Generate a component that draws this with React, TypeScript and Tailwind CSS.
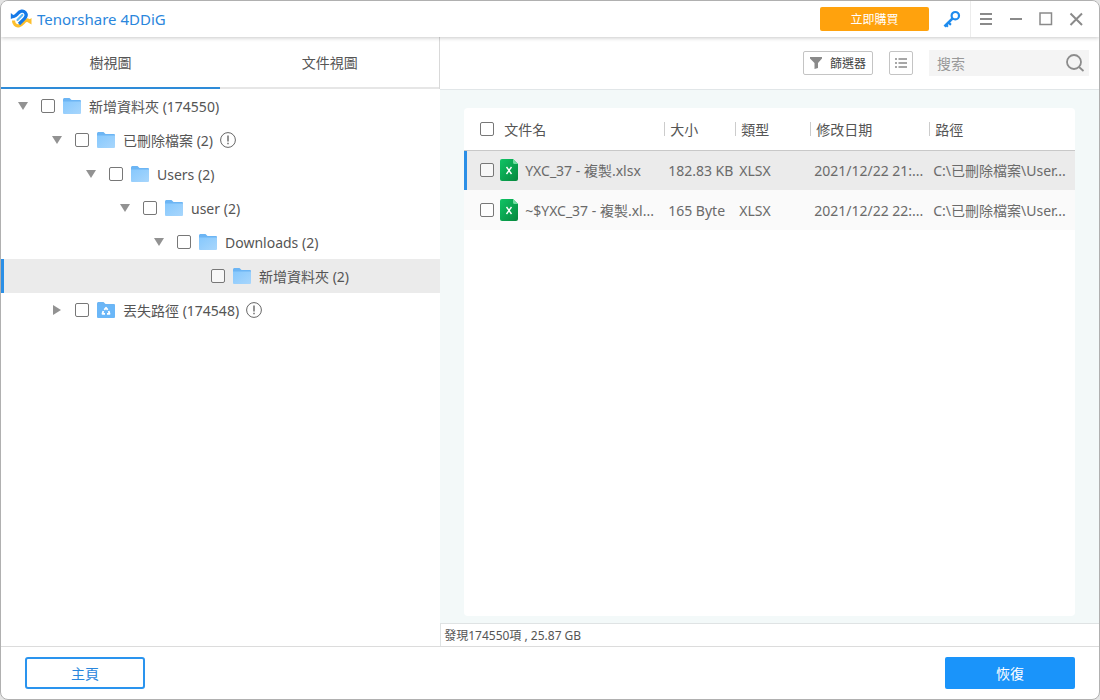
import React from "react";

type Node = {
  label: string;
  indent: string;
  state: "open" | "closed" | "leaf";
  info?: boolean;
  recycled?: boolean;
  selected?: boolean;
};

const nodes: Node[] = [
  { label: "新增資料夾 (174550)", indent: "pl-4", state: "open" },
  { label: "已刪除檔案 (2)", indent: "pl-[50px]", state: "open", info: true },
  { label: "Users (2)", indent: "pl-[84px]", state: "open" },
  { label: "user (2)", indent: "pl-[118px]", state: "open" },
  { label: "Downloads (2)", indent: "pl-[152px]", state: "open" },
  { label: "新增資料夾 (2)", indent: "pl-[186px]", state: "leaf", selected: true },
  { label: "丟失路徑 (174548)", indent: "pl-[50px]", state: "closed", info: true, recycled: true },
];

const files = [
  { name: "YXC_37 - 複製.xlsx", size: "182.83 KB", type: "XLSX", date: "2021/12/22 21:...", path: "C:\\已刪除檔案\\User...", selected: true },
  { name: "~$YXC_37 - 複製.xl...", size: "165 Byte", type: "XLSX", date: "2021/12/22 22:...", path: "C:\\已刪除檔案\\User...", selected: false },
];

const columns = ["大小", "類型", "修改日期", "路徑"];

function Check({ label }: { label: string }) {
  return (
    <input
      type="checkbox"
      aria-label={label}
      className="block size-[14px] shrink-0 appearance-none rounded-[2px] border border-[#777] bg-white/60 checked:bg-[#1a91f8]"
    />
  );
}

function Logo() {
  return (
    <svg width="22" height="20" viewBox="0 0 22 20" fill="none" aria-hidden="true">
      <path d="M3.500 11.500C3.500 15 6 17.300 8.800 16.800C11.800 16.200 13 13.800 15 12C16.500 10.600 18 10.600 19.500 12" stroke="#fdbf2d" strokeWidth="3.200" />
      <path d="M21.500 9V15.500L16.500 12.500Z" fill="#fdbf2d" />
      <path d="M2 7.300C4 8.300 5.500 7 7.500 4.800C10 1.800 13.200 1.200 15.200 3.500C17 5.800 16 8 14.200 9.800L9 15" stroke="#1479e8" strokeWidth="3.200" />
      <path d="M0.800 4V10L5.500 8Z" fill="#1479e8" />
      <path d="M12.300 6L7.500 11" stroke="#5cb8f5" strokeWidth="2.200" strokeLinecap="round" />
    </svg>
  );
}

function KeyIcon() {
  return (
    <svg width="18" height="18" viewBox="0 0 18 18" fill="none" stroke="#1e8bee" aria-hidden="true">
      <circle cx="12.300" cy="5.700" r="3.700" strokeWidth="2.200" />
      <path d="M9.800 8.200L1.500 16.500" strokeWidth="2.600" />
      <path d="M5.300 12.300l2.600 2.600M2.700 14.500l2.200 2.200" strokeWidth="2.200" />
    </svg>
  );
}

function Folder({ recycled }: { recycled?: boolean }) {
  return (
    <svg width="18" height="16" viewBox="0 0 18 16" className="shrink-0" aria-hidden="true">
      <defs>
        <linearGradient id="folder" x1="0" y1="0" x2="1" y2="1">
          <stop offset="0" stopColor="#86c8fd" />
          <stop offset="1" stopColor="#a8d6fc" />
        </linearGradient>
      </defs>
      <path d="M0 1.500Q0 0 1.200 0H6.500L8.500 2H17Q18 2 18 3V8H0Z" fill="#6cb5f4" />
      <path d="M0 3.500H18V15Q18 16 17 16H1Q0 16 0 15Z" fill={recycled ? "#6bb7f8" : "url(#folder)"} />
      {recycled && (
        <path
          d="M7.300 7.900L9 5.800L10.700 7.900M11.700 9L12.500 11.800H10M8 11.800H5.500L6.300 9"
          stroke="#fff"
          strokeWidth="1.800"
          strokeLinejoin="round"
          fill="none"
        />
      )}
    </svg>
  );
}

function SheetIcon() {
  return (
    <svg width="18" height="22" viewBox="0 0 18 22" className="shrink-0" aria-hidden="true">
      <defs>
        <linearGradient id="sheet" x1="0" y1="0" x2="1" y2="1">
          <stop offset="0" stopColor="#0fc465" />
          <stop offset="1" stopColor="#06873d" />
        </linearGradient>
      </defs>
      <path d="M2 0H13L18 5V20Q18 22 16 22H2Q0 22 0 20V2Q0 0 2 0Z" fill="url(#sheet)" />
      <path d="M13 0L18 5H14.500Q13 5 13 3.500Z" fill="#6fdd9f" />
      <path d="M6.500 8L11.500 15M11.500 8L6.500 15" stroke="#fff" strokeWidth="1.400" />
    </svg>
  );
}

function Arrow({ state }: { state: Node["state"] }) {
  if (state === "leaf") return <span className="w-3 shrink-0" />;
  return (
    <button aria-label={state === "open" ? "收合" : "展開"} className="w-3 shrink-0">
      <svg width="12" height="10" viewBox="0 0 12 10" className="block" aria-hidden="true">
        <path d={state === "open" ? "M1 1H11L6 9Z" : "M2 0V10L10 5Z"} fill="#929292" />
      </svg>
    </button>
  );
}

function InfoIcon() {
  return (
    <svg width="16" height="16" viewBox="0 0 16 16" fill="none" stroke="#666" className="shrink-0" aria-hidden="true">
      <circle cx="8" cy="8" r="7.400" />
      <path d="M8 3.500V9.500M8 10.800V12.300" strokeWidth="1.400" />
    </svg>
  );
}

export default function App() {
  return (
    <div className="h-screen bg-[#e4e4e4] font-['Noto_Sans','Noto_Sans_CJK_TC',sans-serif] text-sm text-[#555]">
      <div className="flex h-full flex-col overflow-hidden rounded-lg border border-[#b0b0b0] bg-white">
        <header className="relative z-10 flex h-9 shrink-0 items-center bg-white pl-[9px] shadow-[0_1px_4px_rgba(0,0,0,0.22)]">
          <Logo />
          <h1 className="ml-[5px] pt-0.5 text-[15px] font-normal text-[#2a86dc]">Tenorshare 4DDiG</h1>
          <button className="ml-auto h-6 w-[109px] rounded-[2px] bg-[#ffa20d] pt-0.5 text-xs text-white">立即購買</button>
          <button aria-label="註冊" className="ml-[14px]"><KeyIcon /></button>
          <div className="ml-[9px] flex h-full items-center gap-4 border-l border-[#ececec] pr-4 pl-2 text-[#8a8a8a]">
            <button aria-label="選單">
              <svg width="14" height="14" viewBox="0 0 14 14" stroke="currentColor" strokeWidth="2"><path d="M1 2H13M1 7H13M1 12H13" /></svg>
            </button>
            <button aria-label="最小化">
              <svg width="14" height="14" viewBox="0 0 14 14" stroke="currentColor" strokeWidth="2"><path d="M1 7H13" /></svg>
            </button>
            <button aria-label="最大化">
              <svg width="14" height="14" viewBox="0 0 14 14" stroke="currentColor" strokeWidth="1.500" fill="none"><path d="M1 1H12.500V12.500H1Z" /></svg>
            </button>
            <button aria-label="關閉">
              <svg width="14" height="14" viewBox="0 0 14 14" stroke="currentColor" strokeWidth="2"><path d="M1.500 1.500L13 13M13 1.500L1.500 13" /></svg>
            </button>
          </div>
        </header>

        <main className="flex min-h-0 flex-1">
          <aside className="flex w-2/5 shrink-0 flex-col">
            <div role="tablist" className="flex h-[52px] shrink-0 border-r border-[#d9d9d9]">
              <button role="tab" aria-selected="true" className="w-1/2 border-b-2 border-[#2e8bd8] pt-0.5">樹視圖</button>
              <button role="tab" aria-selected="false" className="w-1/2 border-b-2 border-[#e6e6e6] pt-0.5">文件視圖</button>
            </div>
            <ul>
              {nodes.map((n) => (
                <li
                  key={n.label}
                  className={`flex h-[34px] items-center ${n.indent} ${n.selected ? "bg-[#ebebeb] shadow-[inset_3px_0_0_#2b8fe6]" : ""}`}
                >
                  <Arrow state={n.state} />
                  <span className="ml-3 flex items-center gap-2">
                    <Check label={n.label} />
                    <Folder recycled={n.recycled} />
                  </span>
                  <span className="ml-2 pt-0.5 whitespace-nowrap">{n.label}</span>
                  {n.info && <span className="ml-[7px]"><InfoIcon /></span>}
                </li>
              ))}
            </ul>
          </aside>

          <section className="flex min-w-0 flex-1 flex-col">
            <div className="flex h-[53px] shrink-0 items-center justify-end border-b border-[#e1e6e8] pr-[10px]">
              <button className="flex h-6 items-center gap-[7px] rounded-[2px] border border-[#c4c4c4] pr-[6px] pl-[5px] text-xs text-[#444]">
                <svg width="14" height="12" viewBox="0 0 14 12" fill="#8a8a8a" aria-hidden="true"><path d="M1 0H13V1.500L9 6V11L5.500 12V6L1 1.500Z" /></svg>
                <span className="pt-0.5">篩選器</span>
              </button>
              <button aria-label="清單檢視" className="ml-4 flex size-6 items-center justify-center rounded-[2px] border border-[#c4c4c4]">
                <svg width="14" height="12" viewBox="0 0 14 12" stroke="#8a8a8a" strokeWidth="1.400" aria-hidden="true">
                  <path d="M1 2H3M4.500 2H13M1 6H3M4.500 6H13M1 10H3M4.500 10H13" />
                </svg>
              </button>
              <div className="ml-4 flex h-[26px] w-40 items-center bg-[#f4f4f4] pr-1 pl-2">
                <input aria-label="搜索" placeholder="搜索" className="min-w-0 flex-1 bg-transparent pt-0.5 outline-none placeholder:text-[#999]" />
                <button aria-label="開始搜索">
                  <svg width="19" height="19" viewBox="0 0 19 19" fill="none" stroke="#8c8c8c" strokeWidth="1.800" className="block" aria-hidden="true">
                    <circle cx="8" cy="8" r="7" /><path d="M13 13L17.500 17" />
                  </svg>
                </button>
              </div>
            </div>

            <div className="flex min-h-0 flex-1 bg-[#f3f9f9] pt-[18px] pr-6 pb-[7px] pl-6">
              <div className="min-w-0 flex-1 overflow-hidden rounded bg-white">
                <table className="w-full table-fixed border-collapse text-left">
                  <colgroup>
                    <col className="w-[200px]" /><col className="w-[71px]" /><col className="w-[75px]" /><col className="w-[119px]" /><col />
                  </colgroup>
                  <thead>
                    <tr className="h-[42px] border-b border-[#c8c8c8]">
                      <th className="font-normal">
                        <div className="flex items-center gap-[10px] pl-4">
                          <Check label="全選" />
                          <span className="pt-0.5">文件名</span>
                        </div>
                      </th>
                      {columns.map((c) => (
                        <th key={c} className="font-normal">
                          <div className="flex h-[14px] items-center border-l border-[#ccc] pl-[5px]">
                            <span className="pt-0.5">{c}</span>
                          </div>
                        </th>
                      ))}
                    </tr>
                  </thead>
                  <tbody className="text-[#6a6a6a]">
                    {files.map((f) => (
                      <tr key={f.name} className={`h-10 ${f.selected ? "bg-[#ebebeb] shadow-[inset_3px_0_0_#2b8fe6]" : "bg-[#fafafa]"}`}>
                        <td>
                          <div className="flex items-center pl-4">
                            <Check label={f.name} />
                            <span className="ml-[6px] shrink-0"><SheetIcon /></span>
                            <span className="ml-[7px] truncate pt-0.5">{f.name}</span>
                          </div>
                        </td>
                        <td className="pt-0.5 pl-1 whitespace-nowrap">{f.size}</td>
                        <td className="pt-0.5 pl-1 whitespace-nowrap">{f.type}</td>
                        <td className="truncate pt-0.5 pl-1">{f.date}</td>
                        <td className="truncate pt-0.5 pl-1">{f.path}</td>
                      </tr>
                    ))}
                  </tbody>
                </table>
              </div>
            </div>
            <div className="flex h-[23px] shrink-0 items-center border-t border-l border-[#dfe3e4] pt-0.5 pl-[3px] text-xs">發現174550項 , 25.87 GB</div>
          </section>
        </main>

        <footer className="flex h-[53px] shrink-0 items-center justify-between border-t border-[#dcdcdc] px-6">
          <button className="h-8 w-[120px] rounded-[3px] border-2 border-[#2a94ee] pt-0.5 text-[#2a86dc]">主頁</button>
          <button className="h-8 w-[130px] rounded-[2px] bg-[#1a94fa] pt-0.5 text-white">恢復</button>
        </footer>
      </div>
    </div>
  );
}
